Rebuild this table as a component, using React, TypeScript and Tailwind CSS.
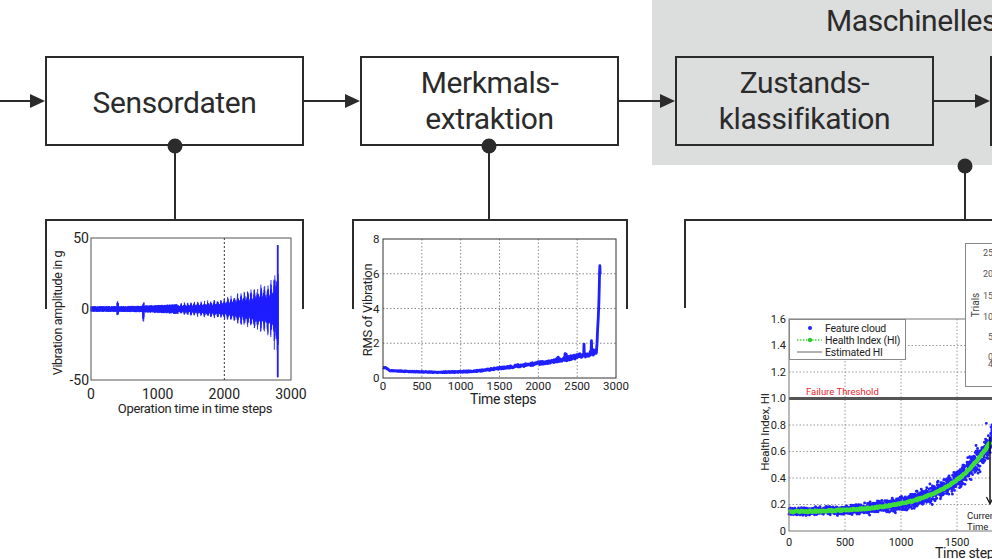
import React from "react";

const INK = "#2b2b2b";
const BLUE = "#1f1fff";
const FONT = "Roboto, 'Liberation Sans', sans-serif";

function rng(seed: number) {
  let a = seed >>> 0;
  return () => {
    a = (a + 0x6d2b79f5) >>> 0;
    let t = a;
    t = Math.imul(t ^ (t >>> 15), t | 1);
    t ^= t + Math.imul(t ^ (t >>> 7), t | 61);
    return ((t ^ (t >>> 14)) >>> 0) / 4294967296;
  };
}

function interp(pts: [number, number][], t: number) {
  if (t <= pts[0][0]) return pts[0][1];
  for (let i = 1; i < pts.length; i++) {
    if (t <= pts[i][0]) {
      const [t0, v0] = pts[i - 1];
      const [t1, v1] = pts[i];
      return v0 + ((v1 - v0) * (t - t0)) / (t1 - t0);
    }
  }
  return pts[pts.length - 1][1];
}

function Arrow({ head = true }: { head?: boolean }) {
  return (
    <div className="flex h-full w-full items-center">
      <div className="h-[2px] flex-1 bg-[#2b2b2b]" />
      {head && (
        <svg width="15" height="14" viewBox="0 0 15 14" className="block shrink-0">
          <path d="M0 0 L15 7 L0 14 Z" fill={INK} />
        </svg>
      )}
    </div>
  );
}

function Box({ children, className = "" }: { children?: React.ReactNode; className?: string }) {
  return (
    <div
      className={`flex h-[90px] w-[259px] shrink-0 items-center justify-center border-2 border-[#2b2b2b] text-center text-[30px] leading-[36px] tracking-[-0.4px] text-[#2b2b2b] ${className}`}
    >
      <div>{children}</div>
    </div>
  );
}

function Chart1() {
  const r = rng(11);
  const X = (t: number) => 46 + (t / 3000) * 200;
  const Y = (v: number) => 163 - v * 1.42;
  let d = "";
  for (let t = 0; t <= 2812; t += 2.5) {
    let env: number;
    if (t < 2000) env = 2.4 + 5.3 * Math.pow(t / 2000, 2.5);
    else if (t < 2700) env = 7.7 + ((t - 2000) / 700) * 13;
    else if (t < 2775) env = 20.7 + ((t - 2700) / 75) * 12;
    else env = 40;
    const burst =
      t > 1300 ? 0.5 + 0.5 * Math.pow(Math.abs(Math.cos((Math.PI * t) / 50)), 4) : 0.85;
    let up = env * burst * (0.55 + 0.45 * r());
    let dn = env * burst * (0.55 + 0.45 * r());
    if (Math.abs(t - 400) < 12) {
      up = 3 + 3 * r();
      dn = 2.5 + 2 * r();
    }
    if (Math.abs(t - 785) < 12) {
      up = 2.5 + 2.5 * r();
      dn = 4 + 5 * r();
    }
    if (t >= 2795 && t <= 2806) {
      up = 45;
      dn = 48;
    }
    d += `M${X(t).toFixed(2)} ${Y(up).toFixed(2)}V${Y(-dn).toFixed(2)}`;
  }
  return (
    <svg width="265" height="272" className="block shrink-0 overflow-visible" fontFamily={FONT}>
      <line x1="130" y1="0" x2="130" y2="74" stroke={INK} strokeWidth="2" />
      <circle cx="130" cy="0" r="7.5" fill={INK} />
      <path d="M1 163 V74 H258 V163" fill="none" stroke={INK} strokeWidth="2" />
      <line x1={X(2000)} y1="92" x2={X(2000)} y2="234" stroke="#333" strokeWidth="1" strokeDasharray="2 2" />
      <path d={d} stroke={BLUE} strokeWidth="0.9" fill="none" />
      <rect x="46" y="92" width="200" height="142" fill="none" stroke="#555" strokeWidth="1" />
      <g fontSize="14" fill="#222" dominantBaseline="central">
        <text x="44" y="92" textAnchor="end">50</text>
        <text x="44" y="163" textAnchor="end">0</text>
        <text x="44" y="234" textAnchor="end">-50</text>
        <text x="46" y="248" textAnchor="middle">0</text>
        <text x={X(1000)} y="248" textAnchor="middle">1000</text>
        <text x={X(2000)} y="248" textAnchor="middle">2000</text>
        <text x={X(3000)} y="248" textAnchor="middle">3000</text>
      </g>
      <text x="150" y="262" fontSize="13" fill="#222" textAnchor="middle" dominantBaseline="central" letterSpacing="-0.3">
        Operation time in time steps
      </text>
      <text
        transform="translate(12 167) rotate(-90)"
        fontSize="12.5"
        fill="#222"
        textAnchor="middle"
        dominantBaseline="central"
        letterSpacing="-0.3"
      >
        Vibration amplitude in g
      </text>
    </svg>
  );
}

function Chart2() {
  const r = rng(5);
  const X = (t: number) => 31 + (t * 233) / 3000;
  const Y = (v: number) => 232 - v * 17.375;
  const key: [number, number][] = [
    [0, 0.6],
    [40, 0.58],
    [90, 0.42],
    [300, 0.38],
    [700, 0.33],
    [1000, 0.36],
    [1200, 0.4],
    [1500, 0.56],
    [2000, 0.84],
    [2300, 1.04],
    [2500, 1.24],
    [2700, 1.42],
    [2750, 1.5],
    [2762, 2.6],
    [2778, 4.2],
    [2792, 6.6],
    [2798, 5.6],
  ];
  const pts: string[] = [];
  for (let t = 0; t <= 2798; t += 4) {
    const base = interp(key, t);
    const amp = 0.02 + 0.13 * Math.pow(t / 2740, 2);
    let v = base + (r() * 2 - 1) * amp;
    if (t > 2200 && t < 2740 && r() < 0.03) v += 0.1 + r() * 0.2;
    if (Math.abs(t - 2588) < 3) v = 1.95;
    if (Math.abs(t - 2684) < 3) v = 2.15;
    pts.push(`${X(t).toFixed(2)},${Y(v).toFixed(2)}`);
  }
  const gx = [500, 1000, 1500, 2000, 2500];
  const gy = [2, 4, 6];
  return (
    <svg width="276" height="272" className="block shrink-0 overflow-visible" fontFamily={FONT}>
      <line x1="137" y1="0" x2="137" y2="74" stroke={INK} strokeWidth="2" />
      <circle cx="137" cy="0" r="7.5" fill={INK} />
      <path d="M1 163 V74 H275 V163" fill="none" stroke={INK} strokeWidth="2" />
      {gx.map((t) => (
        <line key={t} x1={X(t)} y1="93" x2={X(t)} y2="232" stroke="#888" strokeWidth="1" strokeDasharray="1.5 2" />
      ))}
      {gy.map((v) => (
        <line key={v} x1="31" y1={Y(v)} x2="264" y2={Y(v)} stroke="#888" strokeWidth="1" strokeDasharray="1.5 2" />
      ))}
      <polyline points={pts.join(" ")} fill="none" stroke={BLUE} strokeWidth="2.8" strokeLinejoin="round" />
      <rect x="31" y="93" width="233" height="139" fill="none" stroke="#333" strokeWidth="1" />
      <g fontSize="11.5" fill="#222" dominantBaseline="central">
        {[0, 2, 4, 6, 8].map((v) => (
          <text key={v} x="27.5" y={Y(v)} textAnchor="end">
            {v}
          </text>
        ))}
        {[0, 500, 1000, 1500, 2000, 2500, 3000].map((t) => (
          <text key={t} x={X(t)} y="239.5" textAnchor="middle">
            {t}
          </text>
        ))}
      </g>
      <text x="151" y="253" fontSize="14" fill="#222" textAnchor="middle" dominantBaseline="central" letterSpacing="-0.3">
        Time steps
      </text>
      <text
        transform="translate(15 164) rotate(-90)"
        fontSize="13"
        fill="#222"
        textAnchor="middle"
        dominantBaseline="central"
        letterSpacing="-0.3"
      >
        RMS of Vibration
      </text>
    </svg>
  );
}

function Chart3() {
  const r = rng(23);
  const X = (t: number) => 137 + t * 0.112;
  const Y = (v: number) => 366 - v * 132.5;
  const HI = (t: number) => 0.14 + 0.005 * Math.exp(t / 385);
  let cloud = "";
  for (let t = 0; t <= 1815; t += 1.0) {
    const sig = 0.013 + 0.034 * Math.pow(t / 1800, 2);
    let v = HI(t) + (r() + r() + r() - 1.5) * 2 * sig;
    if (t > 1650 && r() < 0.03) v += 0.05 + r() * 0.12;
    cloud += `M${X(t).toFixed(2)} ${Y(v).toFixed(2)}h0`;
  }
  const green: string[] = [];
  for (let t = 0; t <= 1800; t += 8) {
    const v = HI(t) + (r() - 0.5) * 0.01;
    green.push(`${X(t).toFixed(2)},${Y(v).toFixed(2)}`);
  }
  const gx = [500, 1000, 1500];
  const gy = [0.2, 0.4, 0.6, 0.8, 1.2, 1.4];
  return (
    <svg width="340" height="394" className="block shrink-0 overflow-visible" fontFamily={FONT}>
      <line x1="313" y1="1" x2="313" y2="55" stroke={INK} strokeWidth="2" />
      <circle cx="313" cy="1" r="7.5" fill={INK} />
      <path d="M33 143 V55 H360" fill="none" stroke={INK} strokeWidth="2" />
      {gx.map((t) => (
        <line key={t} x1={X(t)} y1="154" x2={X(t)} y2="366" stroke="#999" strokeWidth="1" strokeDasharray="1.5 2" />
      ))}
      {gy.map((v) => (
        <line key={v} x1="137" y1={Y(v)} x2="360" y2={Y(v)} stroke="#999" strokeWidth="1" strokeDasharray="1.5 2" />
      ))}
      <line x1="137" y1={Y(1)} x2="360" y2={Y(1)} stroke="#555" strokeWidth="3" />
      <text x="154" y="226" fontSize="9.5" fill="#e8262c" dominantBaseline="central">
        Failure Threshold
      </text>
      <path d={cloud} stroke={BLUE} strokeWidth="2.9" strokeLinecap="round" fill="none" />
      <polyline points={green.join(" ")} fill="none" stroke="#3ddc3d" strokeWidth="4.5" strokeLinejoin="round" />
      <rect x="137" y="154" width="230" height="212" fill="none" stroke="#777" strokeWidth="1" />
      <g fontSize="11" fill="#222" dominantBaseline="central">
        {[0, 0.2, 0.4, 0.6, 0.8, 1.0, 1.2, 1.4, 1.6].map((v) => (
          <text key={v} x="134" y={Y(v)} textAnchor="end">
            {v === 0 ? "0" : v.toFixed(1)}
          </text>
        ))}
        {[0, 500, 1000, 1500].map((t) => (
          <text key={t} x={X(t)} y="377" textAnchor="middle">
            {t}
          </text>
        ))}
      </g>
      <text x="283" y="388" fontSize="14" fill="#222" dominantBaseline="central" letterSpacing="-0.3">
        Time steps
      </text>
      <text
        transform="translate(113 267) rotate(-90)"
        fontSize="11.5"
        fill="#222"
        textAnchor="middle"
        dominantBaseline="central"
        letterSpacing="-0.2"
      >
        Health Index, HI
      </text>
      {/* legend */}
      <rect x="137.5" y="154.5" width="116" height="40" fill="white" stroke="#888" strokeWidth="1" />
      <circle cx="158" cy="163" r="2" fill={BLUE} />
      <line x1="145" y1="175" x2="170" y2="175" stroke="#3ddc3d" strokeWidth="1.5" strokeDasharray="1.5 1.5" />
      <circle cx="158" cy="175" r="2.2" fill="#2fc62f" />
      <line x1="145" y1="187" x2="170" y2="187" stroke="#999" strokeWidth="1.5" />
      <g fontSize="10.5" fill="#222" dominantBaseline="central" letterSpacing="-0.2">
        <text x="173" y="163">Feature cloud</text>
        <text x="173" y="175">Health Index (HI)</text>
        <text x="173" y="187">Estimated HI</text>
      </g>
      {/* current time */}
      <line x1="338" y1="272" x2="338" y2="338" stroke="#111" strokeWidth="1.5" />
      <path d="M334.5 332 L338 339 L341.5 332" fill="none" stroke="#111" strokeWidth="1.2" />
      <g fontSize="9.5" fill="#222" dominantBaseline="central">
        <text x="315" y="350">Current</text>
        <text x="315" y="361">Time</text>
      </g>
      {/* inset histogram */}
      <rect x="313.5" y="78.5" width="80" height="143" fill="white" stroke="#888" strokeWidth="1" />
      <text
        transform="translate(323 140) rotate(-90)"
        fontSize="10"
        fill="#444"
        textAnchor="middle"
        dominantBaseline="central"
      >
        Trials
      </text>
      <g fontSize="9" fill="#555" dominantBaseline="central" textAnchor="end">
        <text x="341" y="88">25</text>
        <text x="341" y="109">20</text>
        <text x="341" y="131">15</text>
        <text x="341" y="152">10</text>
        <text x="341" y="172">5</text>
        <text x="341" y="192">0</text>
        <text x="341" y="199">4</text>
      </g>
    </svg>
  );
}

export default function App() {
  return (
    <div className="relative flex h-[559px] w-[992px] overflow-hidden bg-white font-['Roboto',sans-serif] text-[#2b2b2b]">
      <div className="w-[45px] shrink-0 pt-[56px]">
        <div className="h-[90px]">
          <Arrow />
        </div>
      </div>
      <div className="flex w-[259px] shrink-0 flex-col pt-[56px]">
        <Box className="pt-[4px]">Sensordaten</Box>
        <Chart1 />
      </div>
      <div className="w-[56px] shrink-0 pt-[56px]">
        <div className="h-[90px]">
          <Arrow />
        </div>
      </div>
      <div className="flex w-[259px] shrink-0 flex-col pt-[56px]">
        <Box>
          Merkmals-
          <br />
          extraktion
        </Box>
        <div className="-ml-[8px]">
          <Chart2 />
        </div>
      </div>
      <div className="w-[33px] shrink-0 pt-[56px]">
        <div className="h-[90px]">
          <Arrow head={false} />
        </div>
      </div>
      <div className="flex w-[340px] shrink-0 flex-col">
        <div className="h-[165px] w-[340px] bg-[#dcdddd]">
          <div className="h-[56px] whitespace-nowrap pl-[174px] pt-[3px] text-[30px] leading-[36px] tracking-[-0.4px]">
            Maschinelles Lernen
          </div>
          <div className="flex">
            <div className="h-[90px] w-[23px] shrink-0">
              <Arrow />
            </div>
            <Box>
              Zustands-
              <br />
              klassifikation
            </Box>
            <div className="h-[90px] w-[56px] shrink-0">
              <Arrow />
            </div>
            <div className="h-[90px] w-[259px] shrink-0 border-2 border-[#2b2b2b]" />
          </div>
        </div>
        <Chart3 />
      </div>
    </div>
  );
}
